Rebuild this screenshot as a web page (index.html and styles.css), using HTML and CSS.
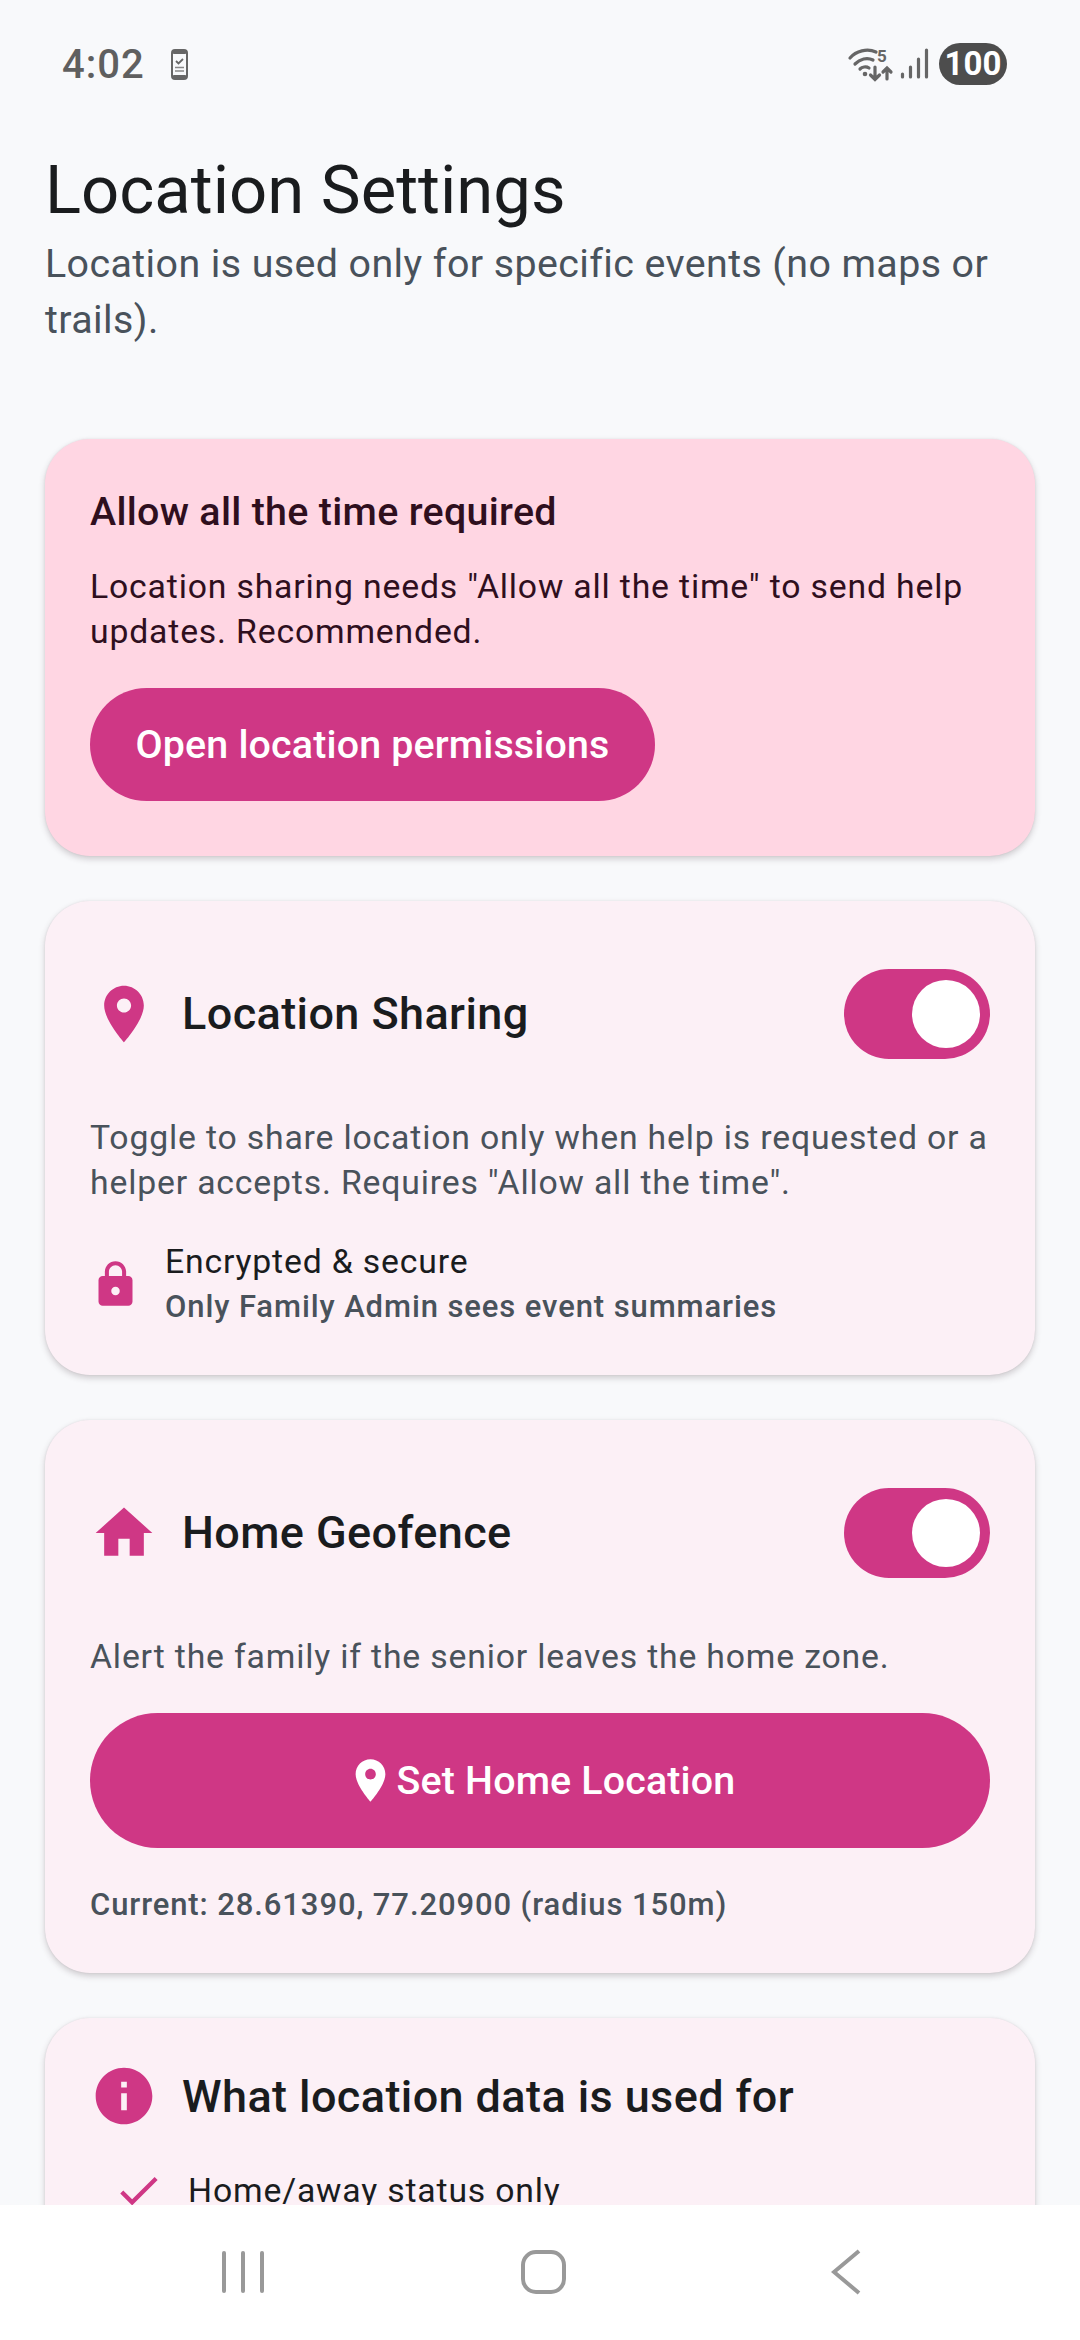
FILE: index.html
```html
<!DOCTYPE html>
<html lang="en">
<head>
  <meta charset="UTF-8">
  <title>Location Settings</title>
  <link rel="stylesheet" href="styles.css">
</head>
<body>
  <div class="phone">
    <!-- Status bar -->
    <div class="status-bar">
      <div class="status-left">
        <span class="clock">4:02</span>
        <svg class="device-icon" viewBox="0 0 17 31">
          <rect x="1" y="1" width="15" height="29" rx="3" fill="#f8f9fb" stroke="#666" stroke-width="2"/>
          <rect x="1" y="1" width="15" height="4" rx="2" fill="#666"/>
          <rect x="1" y="26" width="15" height="4" rx="2" fill="#666"/>
          <path d="M5 12l2.500 2.500L12 10" fill="none" stroke="#666" stroke-width="1.800"/>
          <path d="M4 18.500h9M4 22h9" stroke="#888" stroke-width="1.600"/>
        </svg>
      </div>
      <div class="status-right">
        <svg class="net-icon" viewBox="0 0 84 40">
          <g fill="none" stroke="#666" stroke-width="3.200" stroke-linecap="round">
            <path d="M3 14C9 7 20 4 29 8"/>
            <path d="M8 20C13 15 20 13 26 16"/>
            <path d="M13 25C15 23 19 22 22 24"/>
            <path d="M28 23v12M23.500 31l4.500 4.500 4.500-4.500"/>
            <path d="M40 35V24M36 28l4-4 4 4"/>
            <path d="M55.500 30v3M63.500 23v10M71.500 15v18M79.500 6v27"/>
          </g>
          <circle cx="18" cy="30" r="2.300" fill="#666"/>
          <text class="net-five" x="30" y="18">5</text>
        </svg>
        <span class="battery">100</span>
      </div>
    </div>

    <main class="content">
      <h1 class="page-title">Location Settings</h1>
      <p class="page-sub">Location is used only for specific events (no maps or trails).</p>

      <!-- Permission warning -->
      <section class="card card-alert">
        <h2 class="alert-title">Allow all the time required</h2>
        <p class="small alert-text">Location sharing needs "Allow all the time" to send help updates. Recommended.</p>
        <a class="btn btn-short">Open location permissions</a>
      </section>

      <!-- Location sharing -->
      <section class="card">
        <div class="card-head">
          <svg class="icon-lg" viewBox="0 0 24 24"><path d="M12 2C8.130 2 5 5.130 5 9c0 5.250 7 13 7 13s7-7.750 7-13c0-3.870-3.130-7-7-7zm0 9.500c-1.380 0-2.500-1.120-2.500-2.500s1.120-2.500 2.500-2.500 2.500 1.120 2.500 2.500-1.120 2.500-2.500 2.500z"/></svg>
          <h2 class="card-title">Location Sharing</h2>
          <div class="switch"><span class="thumb"></span></div>
        </div>
        <p class="small muted gap-md">Toggle to share location only when help is requested or a helper accepts. Requires "Allow all the time".</p>
        <div class="info-row">
          <svg class="icon-sm" viewBox="0 0 24 24"><path d="M18 8h-1V6c0-2.760-2.240-5-5-5S7 3.240 7 6v2H6c-1.100 0-2 .9-2 2v10c0 1.100.9 2 2 2h12c1.100 0 2-.9 2-2V10c0-1.100-.9-2-2-2zm-6 9c-1.100 0-2-.9-2-2s.9-2 2-2 2 .9 2 2-.9 2-2 2zm3.100-9H8.900V6c0-1.710 1.390-3.100 3.100-3.100 1.710 0 3.100 1.390 3.100 3.100v2z"/></svg>
          <div>
            <div class="small dark">Encrypted &amp; secure</div>
            <div class="tiny muted">Only Family Admin sees event summaries</div>
          </div>
        </div>
      </section>

      <!-- Geofence -->
      <section class="card card-geo">
        <div class="card-head">
          <svg class="icon-lg" viewBox="0 0 24 24"><path d="M10 20v-6h4v6h5v-8h3L12 3 2 12h3v8z"/></svg>
          <h2 class="card-title">Home Geofence</h2>
          <div class="switch"><span class="thumb"></span></div>
        </div>
        <p class="small muted gap-md">Alert the family if the senior leaves the home zone.</p>
        <a class="btn btn-wide">
          <svg class="btn-icon" viewBox="0 0 24 24"><path d="M12 2C8.130 2 5 5.130 5 9c0 5.250 7 13 7 13s7-7.750 7-13c0-3.870-3.130-7-7-7zm0 9.500c-1.380 0-2.500-1.120-2.500-2.500s1.120-2.500 2.500-2.500 2.500 1.120 2.500 2.500-1.120 2.500-2.500 2.500z"/></svg>
          Set Home Location
        </a>
        <p class="tiny muted current">Current: 28.61390, 77.20900 (radius 150m)</p>
      </section>

      <!-- Data use -->
      <section class="card">
        <div class="card-head card-head-plain">
          <svg class="icon-lg" viewBox="0 0 24 24"><path d="M12 2C6.480 2 2 6.480 2 12s4.480 10 10 10 10-4.480 10-10S17.520 2 12 2zm1 15h-2v-6h2v6zm0-8h-2V7h2v2z"/></svg>
          <h2 class="card-title">What location data is used for</h2>
        </div>
        <div class="check-row">
          <svg class="icon-sm" viewBox="0 0 24 24"><path d="M9 16.170L4.830 12l-1.420 1.410L9 19 21 7l-1.410-1.410z"/></svg>
          <span class="small dark">Home/away status only</span>
        </div>
      </section>
    </main>

    <!-- Navigation bar -->
    <nav class="nav-bar">
      <div class="nav-recent"><span></span><span></span><span></span></div>
      <div class="nav-home"></div>
      <svg class="nav-back" viewBox="0 0 30 46"><path d="M28 2L3 23l25 21" fill="none" stroke="#999" stroke-width="4"/></svg>
    </nav>
  </div>
</body>
</html>
```

FILE: styles.css
```css
* {
  box-sizing: border-box;
  margin: 0;
  padding: 0;
}

body {
  font-family: Roboto, sans-serif;
  background: #f8f9fb;
}

.phone {
  width: 1080px;
  height: 2340px;
  display: flex;
  flex-direction: column;
  overflow: hidden;
}

/* Status bar */
.status-bar {
  height: 128px;
  flex-shrink: 0;
  display: flex;
  justify-content: space-between;
  align-items: center;
  padding: 0 73px 0 62px;
}

.status-left,
.status-right {
  display: flex;
  align-items: center;
}

.clock {
  font-size: 40px;
  font-weight: 500;
  color: #5f5f5f;
  letter-spacing: 1px;
}

.device-icon {
  width: 17px;
  height: 31px;
  margin-left: 26px;
}

.net-icon {
  width: 84px;
  height: 40px;
  margin-right: 8px;
}

.net-five {
  font-size: 17px;
  font-weight: 700;
  fill: #666;
}

.battery {
  width: 68px;
  height: 42px;
  border-radius: 21px;
  background: #4d4d4d;
  color: #fff;
  font-size: 33px;
  font-weight: 700;
  text-align: center;
  line-height: 42px;
}

/* Page content */
.content {
  flex: 1;
  overflow: hidden;
  padding: 17px 45px 0;
}

.page-title {
  font-size: 67px;
  font-weight: 400;
  line-height: 90px;
  color: #1a1c1e;
}

.page-sub {
  font-size: 39.4px;
  line-height: 56px;
  letter-spacing: 0.4px;
  color: #49525b;
  margin-top: 1px;
  margin-bottom: 91px;
}

.card {
  background: #fcf0f6;
  border-radius: 45px;
  padding: 45px;
  margin-bottom: 45px;
  box-shadow: 0 3px 6px rgba(60, 40, 50, 0.22), 0 0 2px rgba(60, 40, 50, 0.1);
}

.card-alert {
  background: #ffd6e3;
}

.alert-title {
  font-size: 39.4px;
  font-weight: 500;
  line-height: 56px;
  letter-spacing: 0.3px;
  color: #2f0f1e;
}

.small {
  font-size: 33.75px;
  line-height: 45px;
  letter-spacing: 0.83px;
}

.tiny {
  font-size: 31px;
  font-weight: 500;
  line-height: 45px;
  letter-spacing: 0.9px;
}

.alert-text {
  color: #2f0f1e;
  margin-top: 24px;
}

.muted {
  color: #49525b;
}

.dark {
  color: #1a1c1e;
}

.btn {
  display: flex;
  align-items: center;
  justify-content: center;
  background: #cf3785;
  color: #fff;
  font-size: 39.4px;
  font-weight: 500;
  letter-spacing: 0.15px;
  border-radius: 68px;
}

.btn-short {
  width: 565px;
  height: 113px;
  margin: 34px 0 10px;
}

.btn-wide {
  height: 135px;
  margin-top: 34px;
  gap: 1px;
}

.btn-icon {
  width: 51px;
  height: 51px;
  fill: #fff;
}

.card-head {
  display: flex;
  align-items: center;
  gap: 24px;
  height: 135px;
}

.card-head-plain {
  height: 68px;
  margin-top: -1px;
}

.card-title {
  flex: 1;
  font-size: 45px;
  font-weight: 500;
  letter-spacing: 0.4px;
  color: #1a1c1e;
}

.icon-lg {
  width: 68px;
  height: 68px;
  flex-shrink: 0;
  fill: #cf3785;
}

.icon-sm {
  width: 51px;
  height: 51px;
  flex-shrink: 0;
  fill: #cf3785;
}

.switch {
  width: 146px;
  height: 90px;
  border-radius: 45px;
  background: #cf3785;
  display: flex;
  align-items: center;
  justify-content: flex-end;
  padding-right: 10px;
}

.thumb {
  width: 68px;
  height: 68px;
  border-radius: 50%;
  background: #fff;
}

.gap-md {
  margin-top: 34px;
}

.info-row {
  display: flex;
  align-items: center;
  gap: 24px;
  margin-top: 34px;
  padding-bottom: 1px;
}

.current {
  margin-top: 34px;
  padding-bottom: 1px;
}

.check-row {
  display: flex;
  align-items: center;
  gap: 24px;
  margin: 35px 0 0 23px;
}

/* Navigation bar */
.nav-bar {
  height: 135px;
  flex-shrink: 0;
  background: #fff;
  position: relative;
  z-index: 1;
  display: flex;
  align-items: center;
  padding: 0 219px 2px 222px;
  justify-content: space-between;
}

.nav-recent {
  display: flex;
  gap: 15.5px;
}

.nav-recent span {
  width: 3.5px;
  height: 42px;
  background: #999;
  border-radius: 2px;
}

.nav-home {
  width: 45px;
  height: 44px;
  margin-right: 7px;
  border: 4px solid #999;
  border-radius: 15px;
}

.nav-back {
  width: 30px;
  height: 46px;
}
```
